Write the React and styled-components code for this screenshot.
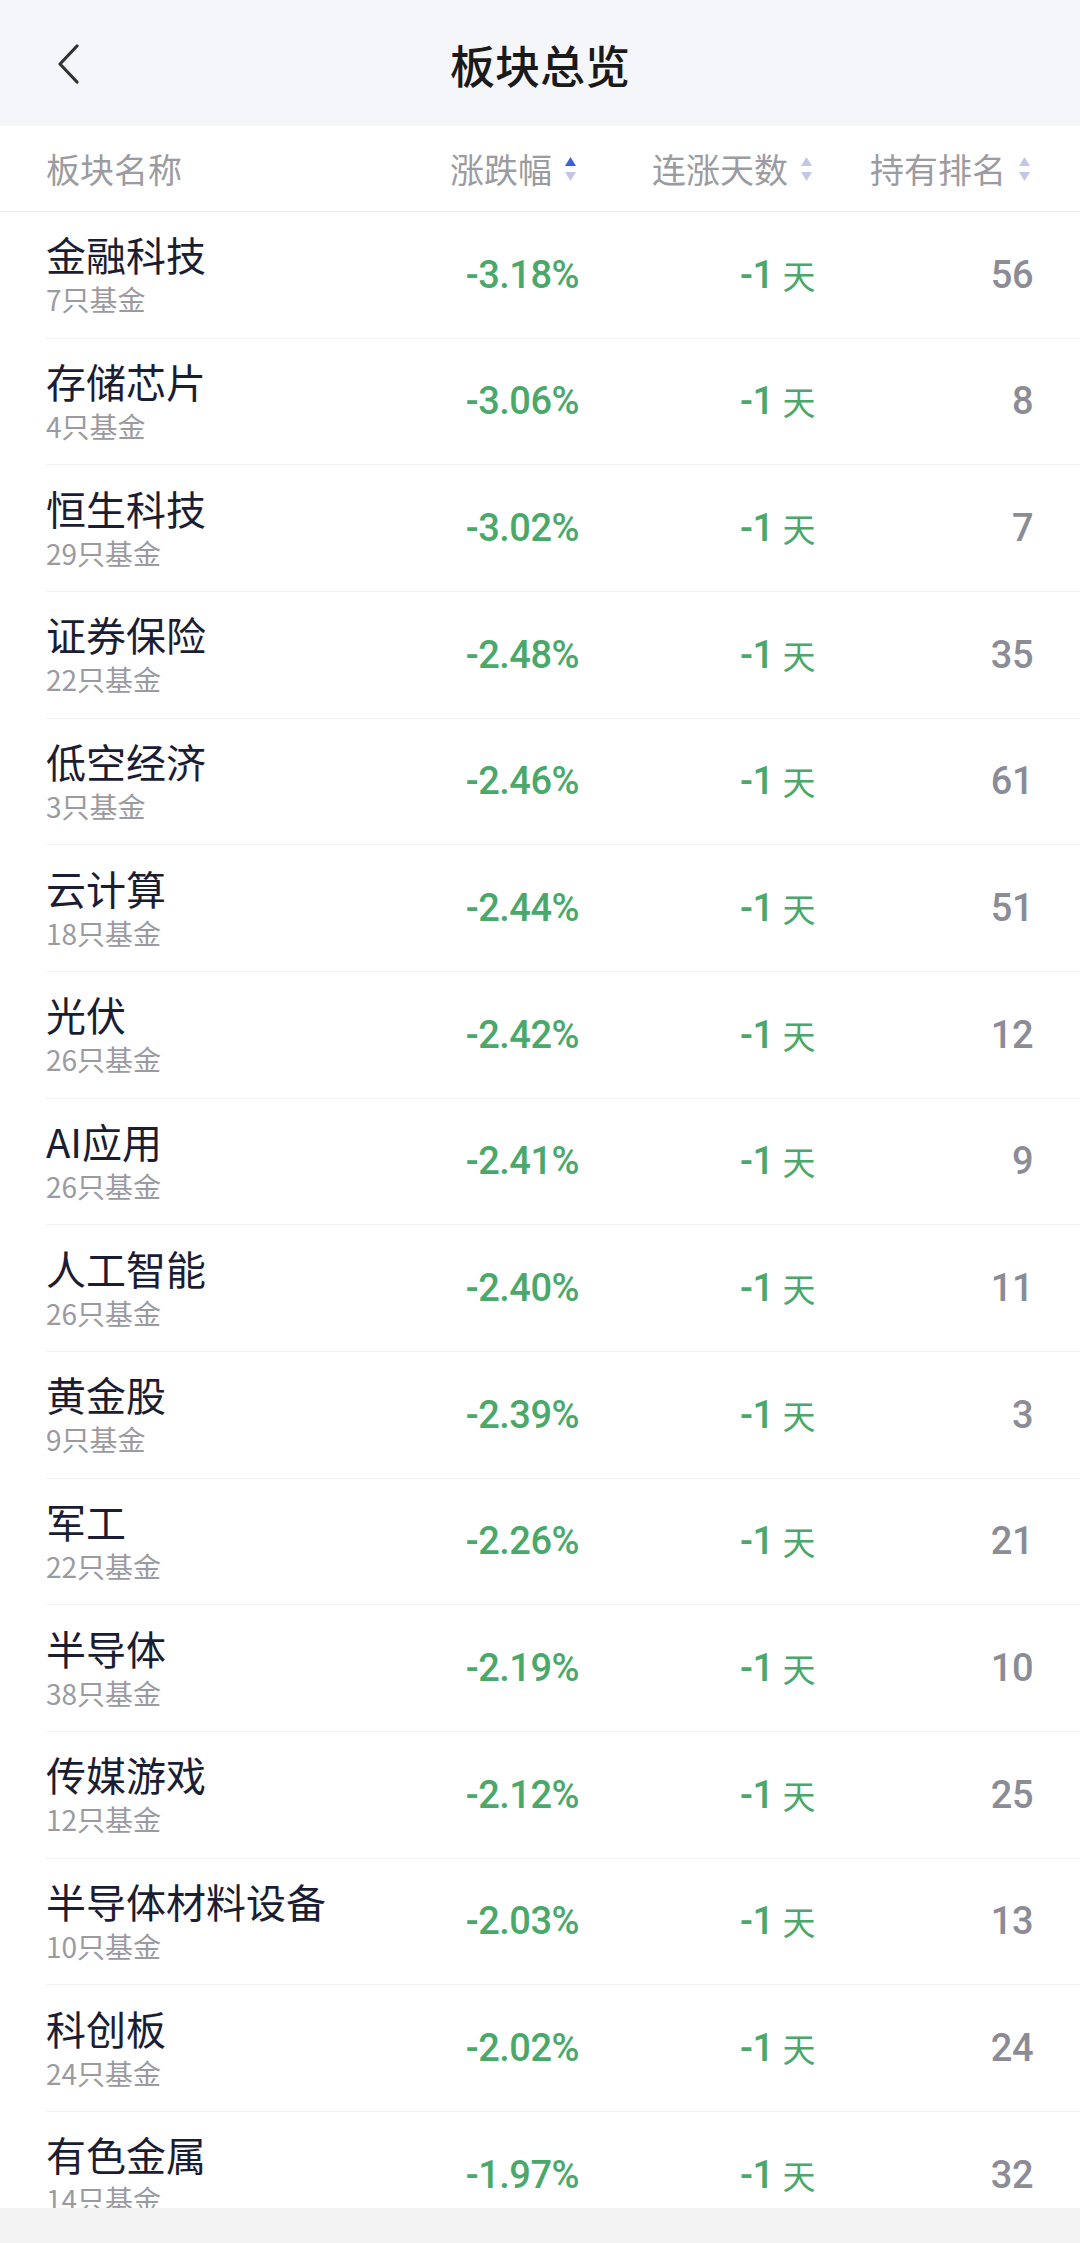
import React from 'react';
import styled, { createGlobalStyle } from 'styled-components';

const GlobalStyle = createGlobalStyle`
  html, body {
    margin: 0;
    padding: 0;
    background: #ffffff;
  }
  body {
    font-family: "Noto Sans CJK SC", "Noto Sans", sans-serif;
  }
`;

const sectors = [
  { name: '金融科技', funds: 7, pct: '-3.18%', days: '-1', rank: 56 },
  { name: '存储芯片', funds: 4, pct: '-3.06%', days: '-1', rank: 8 },
  { name: '恒生科技', funds: 29, pct: '-3.02%', days: '-1', rank: 7 },
  { name: '证券保险', funds: 22, pct: '-2.48%', days: '-1', rank: 35 },
  { name: '低空经济', funds: 3, pct: '-2.46%', days: '-1', rank: 61 },
  { name: '云计算', funds: 18, pct: '-2.44%', days: '-1', rank: 51 },
  { name: '光伏', funds: 26, pct: '-2.42%', days: '-1', rank: 12 },
  { name: 'AI应用', funds: 26, pct: '-2.41%', days: '-1', rank: 9 },
  { name: '人工智能', funds: 26, pct: '-2.40%', days: '-1', rank: 11 },
  { name: '黄金股', funds: 9, pct: '-2.39%', days: '-1', rank: 3 },
  { name: '军工', funds: 22, pct: '-2.26%', days: '-1', rank: 21 },
  { name: '半导体', funds: 38, pct: '-2.19%', days: '-1', rank: 10 },
  { name: '传媒游戏', funds: 12, pct: '-2.12%', days: '-1', rank: 25 },
  { name: '半导体材料设备', funds: 10, pct: '-2.03%', days: '-1', rank: 13 },
  { name: '科创板', funds: 24, pct: '-2.02%', days: '-1', rank: 24 },
  { name: '有色金属', funds: 14, pct: '-1.97%', days: '-1', rank: 32 },
];

const SortIcon = ({ active }) => (
  <SortSvg width="13" height="30" viewBox="0 0 13 30">
    <path d="M1 12 L6.5 3 L12 12 Z" fill={active ? '#3d5fd9' : '#c3c7e6'} />
    <path d="M1 18 L6.5 27 L12 18 Z" fill="#c3c7e6" />
  </SortSvg>
);

const App = () => {
  return (
    <Page>
      <GlobalStyle />
      <NavBar>
        <BackButton>
          <svg width="26" height="40" viewBox="0 0 26 40">
            <path d="M21 2 L4 20 L21 38" fill="none" stroke="#333" strokeWidth="3.2" strokeLinecap="round" strokeLinejoin="round" />
          </svg>
        </BackButton>
        <Title>板块总览</Title>
      </NavBar>
      <HeadRow>
        <HeadCell>板块名称</HeadCell>
        <HeadCell $right>涨跌幅<SortIcon active /></HeadCell>
        <HeadCell $right>连涨天数<SortIcon /></HeadCell>
        <HeadCell $right>持有排名<SortIcon /></HeadCell>
      </HeadRow>
      <List>
        {sectors.map((s) => (
          <Row key={s.name}>
            <NameCell>
              <Name>{s.name}</Name>
              <Sub>{s.funds}只基金</Sub>
            </NameCell>
            <Value>{s.pct}</Value>
            <Value>
              {s.days}
              <DayUnit>天</DayUnit>
            </Value>
            <Value $muted>{s.rank}</Value>
          </Row>
        ))}
      </List>
      <BottomBar />
    </Page>
  );
};

const Page = styled.div`
  height: 100vh;
  display: flex;
  flex-direction: column;
  overflow: hidden;
`;

const NavBar = styled.div`
  flex: 0 0 126px;
  background: #f5f6fa;
  display: flex;
  align-items: center;
  justify-content: center;
  position: relative;
`;

const BackButton = styled.div`
  position: absolute;
  left: 56px;
  top: 44px;
  width: 26px;
  height: 40px;
  display: flex;
`;

const Title = styled.div`
  font-size: 45px;
  font-weight: 500;
  color: #1a1a1a;
  line-height: 1;
  margin-top: 2px;
`;

const columns = `1fr 202px 236px 218px`;

const HeadRow = styled.div`
  flex: 0 0 85px;
  display: grid;
  grid-template-columns: ${columns};
  align-items: center;
  padding: 0 47px 0 46px;
  border-bottom: 1px solid #eeeef0;
`;

const HeadCell = styled.div`
  display: flex;
  align-items: center;
  justify-content: ${(p) => (p.$right ? 'flex-end' : 'flex-start')};
  font-size: 34px;
  color: #9b9ba1;
  line-height: 1;
`;

const SortSvg = styled.svg`
  margin-left: 12px;
  margin-right: 2px;
  flex: 0 0 auto;
`;

const List = styled.div`
  flex: 1;
  overflow: hidden;
`;

const Row = styled.div`
  height: 126.67px;
  box-sizing: border-box;
  margin-left: 46px;
  padding-right: 47px;
  display: grid;
  grid-template-columns: ${columns};
  align-items: center;
  border-bottom: 1px solid #f1f1f3;
`;

const NameCell = styled.div`
  display: flex;
  flex-direction: column;
  gap: 3px;
  margin-top: -2px;
`;

const Name = styled.div`
  font-size: 40px;
  line-height: 48px;
  color: #1b1d33;
`;

const Sub = styled.div`
  font-size: 28px;
  line-height: 36px;
  color: #9a9aa0;
`;

const Value = styled.div`
  display: flex;
  align-items: center;
  justify-content: flex-end;
  font-family: Roboto, "Noto Sans", sans-serif;
  font-size: 38px;
  font-weight: 500;
  letter-spacing: -0.5px;
  color: ${(p) => (p.$muted ? '#8c8c96' : '#4aa86a')};
`;

const DayUnit = styled.span`
  font-family: "Noto Sans CJK SC", sans-serif;
  font-size: 33px;
  font-weight: 400;
  margin-left: 9px;
`;

const BottomBar = styled.div`
  flex: 0 0 35px;
  background: #f3f3f4;
`;

export default App;
